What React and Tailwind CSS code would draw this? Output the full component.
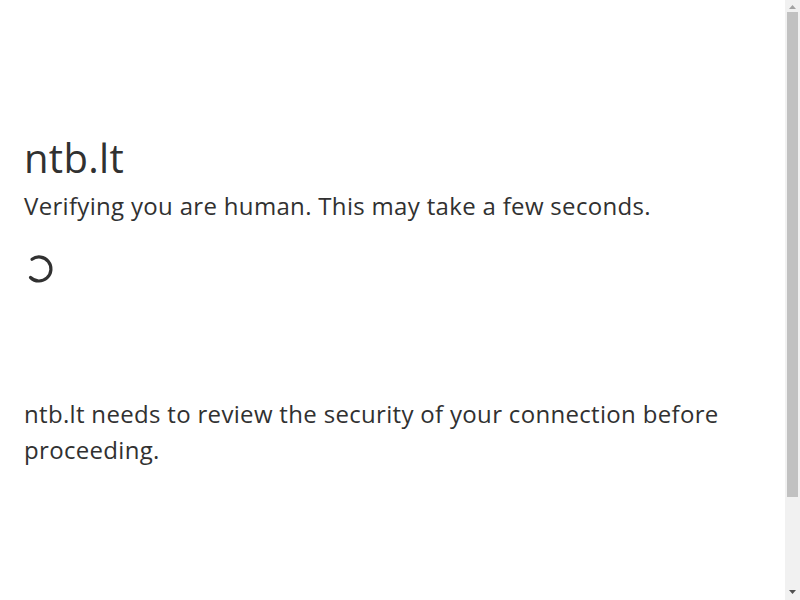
export default function App() {
  return (
    <div className="flex h-[600px] w-full overflow-hidden bg-white">
      <main
        className="flex-1 text-[#313131] tracking-[0.32px]"
        style={{ fontFamily: '"Open Sans", "Noto Sans", sans-serif' }}
      >
        <div className="pt-[128px] px-6">
          <h1 className="text-[40px] leading-[60px] font-normal">ntb.lt</h1>
          <p className="text-[24px] leading-[36px]">Verifying you are human. This may take a few seconds.</p>
          <div className="mt-[30px] h-[30px] w-[30px]">
            <svg width="30" height="30" viewBox="0 0 30 30">
              <path d="M8 5.2 A12 12 0 1 1 6.5 23.5" fill="none" stroke="#313131" strokeWidth="3.2" strokeLinecap="round" />
            </svg>
          </div>
          <p className="mt-[112px] text-[24px] leading-[36px] max-w-[737px]">
            ntb.lt needs to review the security of your connection before proceeding.
          </p>
        </div>
      </main>
      <aside className="flex w-[15px] flex-col bg-[#f1f1f1]">
        <div className="flex h-[12px] items-center justify-center pt-[2px]">
          <svg width="7" height="4" viewBox="0 0 7 4">
            <path d="M3.5 0 L7 4 L0 4 Z" fill="#a3a3a3" />
          </svg>
        </div>
        <div className="flex-1 px-[2px]">
          <div className="h-[485px] w-full bg-[#c1c1c1]" />
        </div>
        <div className="flex h-[15px] items-center justify-center pb-[2px]">
          <svg width="7" height="4" viewBox="0 0 7 4">
            <path d="M0 0 L7 0 L3.5 4 Z" fill="#505050" />
          </svg>
        </div>
      </aside>
    </div>
  );
}
